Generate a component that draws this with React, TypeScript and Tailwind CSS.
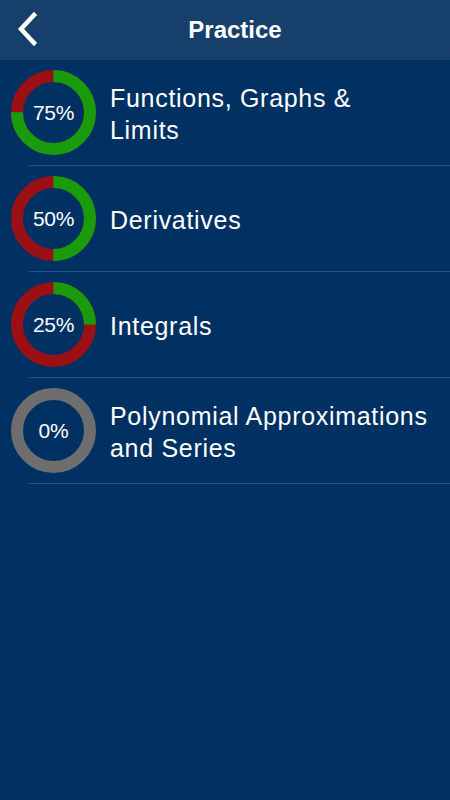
const topics = [
  { pct: 75, title: "Functions, Graphs & Limits", lines: ["Functions, Graphs &", "Limits"] },
  { pct: 50, title: "Derivatives", lines: ["Derivatives"] },
  { pct: 25, title: "Integrals", lines: ["Integrals"] },
  { pct: 0, title: "Polynomial Approximations and Series", lines: ["Polynomial Approximations", "and Series"] },
];

function Ring({ pct }: { pct: number }) {
  const r = 36.5;
  const c = 2 * Math.PI * r;
  const green = (pct / 100) * c;
  return (
    <div className="relative w-[85px] h-[85px] shrink-0">
      <svg width="85" height="85" viewBox="0 0 85 85" className="absolute inset-0">
        {pct === 0 ? (
          <circle cx="42.5" cy="42.5" r={r} fill="none" stroke="#6e6e6e" strokeWidth="12" />
        ) : (
          <g transform="rotate(-90 42.5 42.5)">
            <circle cx="42.5" cy="42.5" r={r} fill="none" stroke="#9c0f14" strokeWidth="12" />
            <circle
              cx="42.5"
              cy="42.5"
              r={r}
              fill="none"
              stroke="#199c0c"
              strokeWidth="12"
              strokeDasharray={`${green} ${c}`}
            />
          </g>
        )}
      </svg>
      <div className="absolute inset-0 flex items-center justify-center text-[21px] text-white tracking-[-0.3px]">
        {pct}%
      </div>
    </div>
  );
}

export default function App() {
  return (
    <div
      className="w-[450px] h-[800px] bg-[#003162] flex flex-col"
      style={{ fontFamily: '"Liberation Sans", Arial, sans-serif' }}
    >
      {/* header */}
      <div className="h-[60px] bg-[#173f6b] flex items-center relative shrink-0">
        <svg width="24" height="34" viewBox="0 0 24 34" className="absolute left-[16px] top-[12px]">
          <path d="M18 3 L5 17 L18 31" fill="none" stroke="#fff" strokeWidth="4.5" strokeLinecap="square" strokeLinejoin="miter" />
        </svg>
        <div className="flex-1 text-center pl-[20px] text-white font-bold text-[24px]">Practice</div>
      </div>

      {topics.map((t) => (
        <div key={t.title} className="flex flex-col">
          <div className="h-[105px] flex items-center pl-[11px]">
            <Ring pct={t.pct} />
            <div className="ml-[14px] pt-[3px] text-white text-[25px] leading-[32px] tracking-[0.7px]">
              {t.lines.map((l) => (
                <div key={l}>{l}</div>
              ))}
            </div>
          </div>
          <div className="h-px ml-[29px] bg-[#22507f]" />
        </div>
      ))}
    </div>
  );
}
